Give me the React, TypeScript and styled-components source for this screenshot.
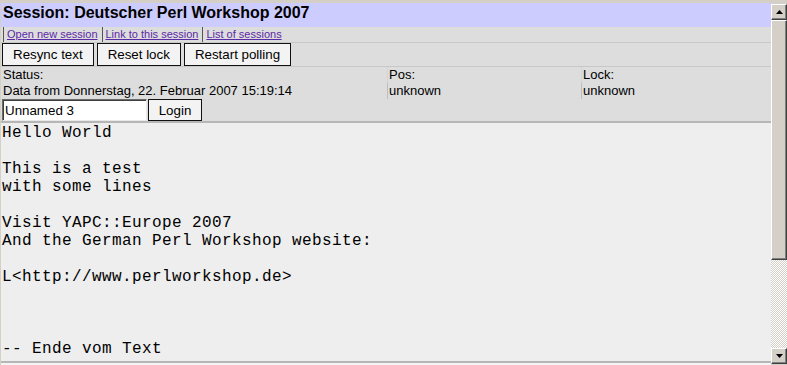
import React from "react";
import styled, { createGlobalStyle } from "styled-components";

const GlobalStyle = createGlobalStyle`
  html, body {
    margin: 0;
    padding: 0;
    background: #d4d0c8;
    overflow: hidden;
  }
  * { box-sizing: border-box; }
`;

const Page = styled.div`
  display: flex;
  width: 787px;
  height: 365px;
  padding-top: 3px;
  background: #d4d0c8;
  font-family: "Liberation Sans", Arial, sans-serif;
  color: #000;
`;

const Frame = styled.div`
  flex: 1;
  display: flex;
  flex-direction: column;
  margin-left: 1px;
  background: #dddddd;
  min-width: 0;
`;

const TitleBar = styled.h1`
  margin: 0;
  height: 24px;
  padding-left: 2px;
  background: #ccccff;
  font-size: 16px;
  font-weight: bold;
  line-height: 20px;
`;

const LinkBar = styled.nav`
  display: flex;
  height: 16px;
  padding-left: 2px;
  border-bottom: 1px solid #c8c8c8;
  font-size: 11px;
  line-height: 15px;
`;

const NavLink = styled.a`
  border-left: 1px solid #555;
  padding-left: 3px;
  margin-right: 4px;
  color: #5b2aa6;
  text-decoration: underline;
  cursor: pointer;
`;

const ButtonBar = styled.div`
  display: flex;
  gap: 3px;
  height: 24px;
  padding-left: 1px;
  border-bottom: 1px solid #c8c8c8;
`;

const Button = styled.button`
  height: 23px;
  padding: 0 10px;
  border: 1px solid #111;
  background: #f3f3f3;
  font-family: "Liberation Sans", Arial, sans-serif;
  font-size: 13.33px;
  color: #000;
  border-radius: 0;
`;

const StatusGrid = styled.div`
  display: grid;
  grid-template-columns: 386px 194px 1fr;
  height: 32px;
  font-size: 13px;
  line-height: 16px;
`;

const StatusCell = styled.div`
  display: flex;
  flex-direction: column;
`;

const Label = styled.span<{ $bordered?: boolean }>`
  padding-left: ${(p) => (p.$bordered ? "1px" : "2px")};
  border-left: ${(p) => (p.$bordered ? "1px solid #d4d4d4" : "none")};
`;

const Value = styled.span<{ $bordered?: boolean }>`
  padding-left: ${(p) => (p.$bordered ? "1px" : "2px")};
  border-left: ${(p) => (p.$bordered ? "1px solid #bdbdbd" : "none")};
`;

const LoginRow = styled.form`
  display: flex;
  gap: 1px;
  height: 24px;
  margin: 0;
  padding-left: 1px;
  border-bottom: 2px solid #b6b6b6;
`;

const NameInput = styled.input`
  width: 145px;
  height: 22px;
  padding: 0 2px;
  border: 1px solid;
  border-color: #6a6a6a #e8e8e8 #e8e8e8 #6a6a6a;
  box-shadow: inset 1px 1px #404040;
  background: #fff;
  font-family: "Liberation Sans", Arial, sans-serif;
  font-size: 13.33px;
  color: #000;
  outline: none;
`;

const LoginButton = styled(Button)`
  height: 22px;
  width: 54px;
  padding: 0;
`;

const TextView = styled.div`
  flex: 1;
  margin: 0;
  padding: 1px 0 0 1px;
  background: #eeeeee;
  border-bottom: 2px solid #b6b6b6;
  font-family: "Liberation Mono", "Courier New", monospace;
  font-size: 16px;
  letter-spacing: 0.4px;
  line-height: 18px;
  white-space: pre;
  overflow: hidden;
`;

const BottomStrip = styled.div`
  height: 2px;
  background: #f4f4f4;
`;

const ScrollBar = styled.div`
  display: flex;
  flex-direction: column;
  width: 16px;
  padding: 1px 0 1px;
`;

const ScrollButton = styled.div`
  display: flex;
  align-items: center;
  justify-content: center;
  height: 16px;
  background: #d4d0c8;
  border: 1px solid;
  border-color: #ffffff #404040 #404040 #ffffff;
  box-shadow: inset -1px -1px #808080;
`;

const Thumb = styled.div`
  height: 240px;
  background: #d4d0c8;
  border: 1px solid;
  border-color: #ffffff #404040 #404040 #ffffff;
  box-shadow: inset -1px -1px #808080;
`;

const Track = styled.div`
  flex: 1;
  background: repeating-conic-gradient(#ffffff 0 25%, #d4d0c8 0 50%) 0 0 / 2px 2px;
`;

const Arrow = ({ up }: { up?: boolean }) => (
  <svg width="7" height="4" viewBox="0 0 7 4">
    <polygon points={up ? "3.5,0 7,4 0,4" : "0,0 7,0 3.5,4"} fill="#000" />
  </svg>
);

const text = `Hello World

This is a test
with some lines

Visit YAPC::Europe 2007
And the German Perl Workshop website:

L<http://www.perlworkshop.de>



-- Ende vom Text`;

export default function App() {
  return (
    <>
      <GlobalStyle />
      <Page>
        <Frame>
          <TitleBar>Session: Deutscher Perl Workshop 2007</TitleBar>
          <LinkBar>
            <NavLink>Open new session</NavLink>
            <NavLink>Link to this session</NavLink>
            <NavLink>List of sessions</NavLink>
          </LinkBar>
          <ButtonBar>
            <Button>Resync text</Button>
            <Button>Reset lock</Button>
            <Button>Restart polling</Button>
          </ButtonBar>
          <StatusGrid>
            <StatusCell>
              <Label>Status:</Label>
              <Value>Data from Donnerstag, 22. Februar 2007 15:19:14</Value>
            </StatusCell>
            <StatusCell>
              <Label $bordered>Pos:</Label>
              <Value $bordered>unknown</Value>
            </StatusCell>
            <StatusCell>
              <Label $bordered>Lock:</Label>
              <Value $bordered>unknown</Value>
            </StatusCell>
          </StatusGrid>
          <LoginRow onSubmit={(e) => e.preventDefault()}>
            <NameInput defaultValue="Unnamed 3" />
            <LoginButton type="submit">Login</LoginButton>
          </LoginRow>
          <TextView>{text}</TextView>
          <BottomStrip />
        </Frame>
        <ScrollBar>
          <ScrollButton>
            <Arrow up />
          </ScrollButton>
          <Thumb />
          <Track />
          <ScrollButton>
            <Arrow />
          </ScrollButton>
        </ScrollBar>
      </Page>
    </>
  );
}
